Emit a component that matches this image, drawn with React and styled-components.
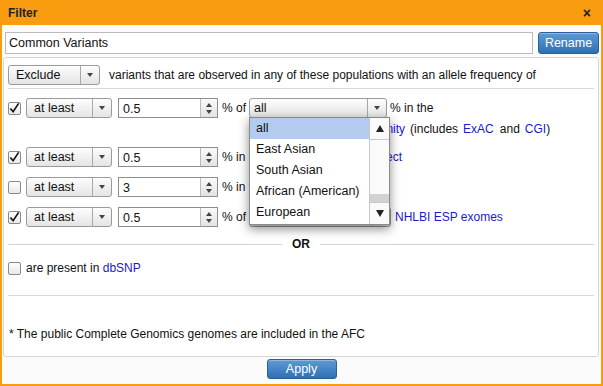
import styled, { createGlobalStyle } from 'styled-components';

const GlobalStyle = createGlobalStyle`
  body {
    margin: 0;
    font-family: "Liberation Sans", Arial, sans-serif;
    font-size: 12px;
    color: #111;
  }
`

const orange = '#f99c10'

const Window = styled.div`
  width: 603px;
  height: 386px;
  box-sizing: border-box;
  border: 2px solid ${orange};
  border-top: 0;
  background: #fbfbfb;
  display: flex;
  flex-direction: column;
`

const Header = styled.div`
  height: 25px;
  margin: 0 -2px;
  background: ${orange};
  display: flex;
  align-items: center;
  justify-content: space-between;
  padding: 0 12px 0 8px;
  font-weight: bold;
  font-size: 12px;
  color: #222;
`

const Close = styled.span`
  font-size: 14px;
  font-weight: bold;
`

const NameRow = styled.div`
  display: flex;
  gap: 5px;
  margin: 7px 2px 0 3px;
`

const NameInput = styled.div`
  flex: 1;
  height: 20px;
  border: 1px solid #bbb;
  background: #fff;
  display: flex;
  align-items: center;
  padding-left: 3px;
  font-size: 12.5px;
`

const BlueButton = styled.button`
  height: ${p => p.$h || 22}px;
  width: ${p => p.$w}px;
  border: 1px solid #2a5f96;
  border-radius: 3px;
  background: linear-gradient(#5d9ad6, #2f6fb3);
  color: #fff;
  font-family: inherit;
  font-size: 12.5px;
  padding: 0;
  box-shadow: inset 0 1px 0 rgba(255,255,255,0.3);
`

const Panel = styled.div`
  margin: 3px 2px 0 1px;
  height: 300px;
  box-sizing: border-box;
  border: 1px solid #d6d6d6;
  border-radius: 3px;
  background: #fff;
  padding: 7px 4px 0 4px;
  display: flex;
  flex-direction: column;
`

const Row = styled.div`
  display: flex;
  align-items: center;
  height: 20px;
  margin-top: ${p => p.$mt || 0}px;
`

const Rule = styled.div`
  border-top: 1px solid #d9d9d9;
  margin-top: ${p => p.$mt || 0}px;
`

const SelectBox = styled.div`
  position: relative;
  width: ${p => p.$w}px;
  height: 20px;
  box-sizing: border-box;
  border: 1px solid #9a9a9a;
  border-radius: 3px;
  background: linear-gradient(#fdfdfd, #e4e4e4);
  display: flex;
  align-items: center;
  flex-shrink: 0;
`

const SelectText = styled.span`
  flex: 1;
  padding-left: ${p => p.$pl || 7}px;
  font-size: 12.5px;
`

const SelectArrow = styled.span`
  width: 18px;
  height: 100%;
  border-left: 1px solid #a8a8a8;
  display: flex;
  align-items: center;
  justify-content: center;
  &::after {
    content: '';
    border-left: 3.5px solid transparent;
    border-right: 3.5px solid transparent;
    border-top: 4px solid #444;
  }
`

const Check = styled.span`
  width: 13px;
  height: 13px;
  box-sizing: border-box;
  border: 1px solid #8a8a8a;
  border-radius: 2px;
  background: linear-gradient(#fff, #e8e8e8);
  display: flex;
  align-items: center;
  justify-content: center;
  flex-shrink: 0;
  margin: 0 5px 0 0;
`

const NumBox = styled.div`
  width: 100px;
  height: 20px;
  box-sizing: border-box;
  border: 1px solid #8e8e8e;
  background: #fff;
  display: flex;
  margin-left: 6px;
  flex-shrink: 0;
`

const NumText = styled.span`
  flex: 1;
  padding: 3px 0 0 4px;
  font-size: 12.5px;
`

const Spinner = styled.span`
  width: 16px;
  border-left: 1px solid #bbb;
  background: linear-gradient(#fafafa, #e3e3e3);
  display: flex;
  flex-direction: column;
  align-items: center;
  justify-content: center;
  gap: 3px;
`

const Tri = styled.span`
  border-left: 3px solid transparent;
  border-right: 3px solid transparent;
  ${p => p.$up ? 'border-bottom: 4px solid #444;' : 'border-top: 4px solid #444;'}
`

const Label = styled.span`
  margin: 0 3px 0 ${p => p.$ml ?? 3}px;
  white-space: nowrap;
`

const Link = styled.span`
  color: #1a1acc;
  margin: 0 ${p => p.$mr || 0}px 0 ${p => p.$ml || 0}px;
`

const SubLine = styled.div`
  margin: 2px 0 0 243px;
  height: 18px;
  display: flex;
  align-items: center;
  white-space: nowrap;
`

const Anchor = styled.div`
  position: relative;
`

const DropList = styled.div`
  position: absolute;
  left: 0;
  top: 19px;
  width: 141px;
  height: 108px;
  box-sizing: border-box;
  border: 1px solid #8a8a8a;
  background: #fff;
  box-shadow: 0 4px 10px rgba(0,0,0,0.45);
  display: flex;
  z-index: 5;
`

const Options = styled.div`
  flex: 1;
`

const Option = styled.div`
  height: 21px;
  line-height: 21px;
  padding-left: 6px;
  font-size: 12.5px;
  background: ${p => p.$active ? '#b3cbee' : 'transparent'};
`

const ScrollBar = styled.div`
  width: 19px;
  border-left: 1px solid #c8c8c8;
  display: flex;
  flex-direction: column;
  background: #fafafa;
`

const ScrollBtn = styled.div`
  height: 21px;
  display: flex;
  align-items: center;
  justify-content: center;
  border-${p => p.$up ? 'bottom' : 'top'}: 1px solid #c8c8c8;
  &::after {
    content: '';
    border-left: 4px solid transparent;
    border-right: 4px solid transparent;
    ${p => p.$up ? 'border-bottom: 7px solid #222;' : 'border-top: 7px solid #222;'}
  }
`

const Track = styled.div`
  flex: 1;
  display: flex;
  flex-direction: column;
  justify-content: flex-end;
`

const Thumb = styled.div`
  height: 8px;
  background: #d2d2d2;
`

const OrRow = styled.div`
  display: flex;
  align-items: center;
  gap: 10px;
  margin-top: 10px;
  font-weight: bold;
  &::before, &::after {
    content: '';
    flex: 1;
    border-top: 1px solid #d4d4d4;
  }
`

const Footnote = styled.div`
  margin: 31px 0 0 1px;
`

const Footer = styled.div`
  display: flex;
  justify-content: center;
  padding-top: 2px;
`

const Tick = () => (
  <svg width="12" height="12" viewBox="0 0 12 12">
    <path d="M1.5 6.5 L4.5 10 L10.5 1" fill="none" stroke="#111" strokeWidth="1.8" />
  </svg>
)

const Select = ({ w, text, pl }) => (
  <SelectBox $w={w}>
    <SelectText $pl={pl}>{text}</SelectText>
    <SelectArrow />
  </SelectBox>
)

const FreqRow = ({ checked, value, mt, children }) => (
  <Row $mt={mt}>
    <Check>{checked && <Tick />}</Check>
    <Select w={86} text="at least" />
    <NumBox>
      <NumText>{value}</NumText>
      <Spinner><Tri $up /><Tri /></Spinner>
    </NumBox>
    {children}
  </Row>
)

const populations = ['all', 'East Asian', 'South Asian', 'African (American)', 'European']

export default function App() {
  return (
    <Window>
      <GlobalStyle />
      <Header>
        <span>Filter</span>
        <Close>×</Close>
      </Header>
      <NameRow>
        <NameInput>Common Variants</NameInput>
        <BlueButton $w={61}>Rename</BlueButton>
      </NameRow>
      <Panel>
        <Row>
          <Select w={92} text="Exclude" pl={7} />
          <Label $ml={9}>variants that are observed in any of these populations with an allele frequency of</Label>
        </Row>
        <Rule $mt={3} />

        <FreqRow checked value="0.5" mt={9}>
          <Label $ml={4}>% of</Label>
          <Anchor>
            <Select w={138} text="all" pl={4} />
            <DropList>
              <Options>
                {populations.map((p, i) => <Option key={p} $active={i === 0}>{p}</Option>)}
              </Options>
              <ScrollBar>
                <ScrollBtn $up />
                <Track><Thumb /></Track>
                <ScrollBtn />
              </ScrollBar>
            </DropList>
          </Anchor>
          <Label>% in the</Label>
        </FreqRow>
        <SubLine>
          Allele Frequency<Link $ml={4} $mr={5}>Community</Link>(includes<Link $ml={5} $mr={6}>ExAC</Link>and<Link $ml={5}>CGI</Link>)
        </SubLine>

        <FreqRow checked value="0.5" mt={9}>
          <Label $ml={4}>% in the<Link $ml={14}>1000 Genomes Project</Link></Label>
        </FreqRow>
        <FreqRow value="3" mt={10}>
          <Label $ml={4}>% in the <Link>ExAC</Link></Label>
        </FreqRow>
        <FreqRow checked value="0.5" mt={10}>
          <Label $ml={4}>% of</Label>
          <Select w={142} text="all" pl={4} />
          <Label $ml={4}><Link>NHLBI ESP exomes</Link></Label>
        </FreqRow>

        <OrRow>OR</OrRow>

        <Row $mt={7}>
          <Check />
          <Label $ml={0}>are present in <Link>dbSNP</Link></Label>
        </Row>
        <Rule $mt={17} />

        <Footnote>* The public Complete Genomics genomes are included in the AFC</Footnote>
      </Panel>
      <Footer>
        <BlueButton $w={70} $h={20}>Apply</BlueButton>
      </Footer>
    </Window>
  )
}
